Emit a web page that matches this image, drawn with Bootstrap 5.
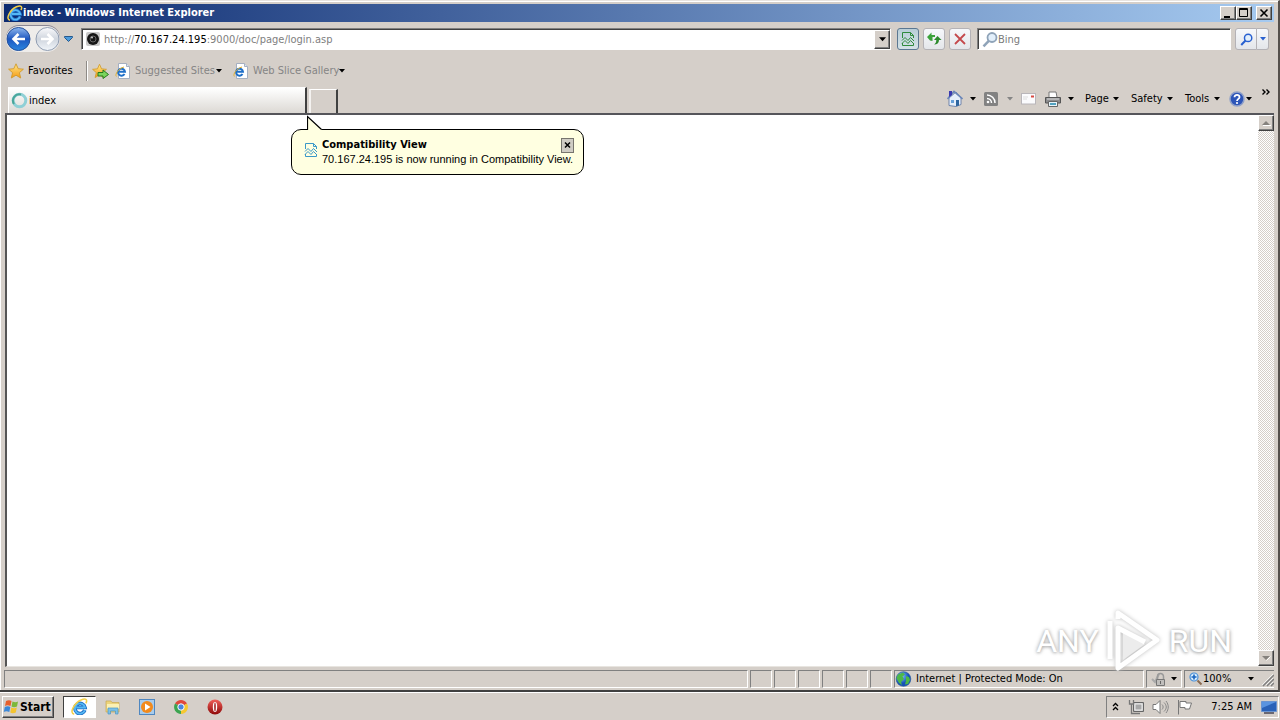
<!DOCTYPE html>
<html lang="en">
<head>
<meta charset="utf-8">
<meta name="viewport" content="width=device-width, initial-scale=1">
<title>index - Windows Internet Explorer</title>
<link href="https://cdn.jsdelivr.net/npm/bootstrap@5.3.0/dist/css/bootstrap.min.css" rel="stylesheet">
<style>
:root{--face:#d5cfc9;--dark:#404040;--shade:#808080}
body{font:11px/14px "DejaVu Sans Condensed","Noto Sans",sans-serif;background:var(--face);color:#000}
svg{display:block;flex:none}
button,.plain{border:0;padding:0;background:none;color:inherit;font:inherit;text-decoration:none;white-space:nowrap}
.frame{padding:4px 4px 0;border-top:1px solid #e8e4e0;border-right:2px solid #55504c;border-bottom:2px solid var(--dark);box-shadow:inset 1px 1px #fff;min-height:0}
.titlebar{height:18px;flex:none;background:linear-gradient(90deg,#0c2a70,#a6caf0);color:#fff;font-weight:bold;margin-top:-1px;padding:0 2px 0 3px}
.raised{background:var(--face);border:1px solid;border-color:#fff var(--dark) var(--dark) #fff;box-shadow:inset -1px -1px var(--shade)}
.winbtn{width:16px;height:14px}
.navrow{height:34px;flex:none;padding:0 5px 0 2px}
.circles{background:#eeecea;border-radius:14px;box-shadow:0 -1px #8b8794}
.sunken{background:#fff;border:1px solid;border-color:var(--shade) #fff #fff var(--shade);box-shadow:inset 1px 1px var(--dark);height:22px}
.sunken input{border:0;outline:0;background:transparent;font:inherit;color:#7a7a7a;min-width:0;padding:2px 0 0}
.urltext{color:#808080;outline:0;white-space:nowrap;padding-top:2px}
.urltext b{font-weight:normal;color:#000}
.drop{width:16px;height:19px}
.gap-nav{margin-left:6px}
.tool{width:22px;height:22px;border:1px solid #b4b2b6;border-radius:3px;background:linear-gradient(#f6f8fb,#e4e6ea)}
.tool.active{background:linear-gradient(#b9ced8,#d4e2e6);border-color:#5b7892;color:#2f8a3c}
.tool.narrow{width:12px}
.blueish{color:#2860d0}
.silver{color:#8fa3b8}
.searchbox{width:254px}
.favrow{height:29px;flex:none;padding-left:4px}
.favhome{width:78px}
.fav{width:107px;margin-left:6px}
.fav.wide{width:112px;margin-left:11px}
.muted{color:#858585}
.divider{width:2px;height:20px;border-left:1px solid #8e8a86;border-right:1px solid #fff}
.tabrow{height:28px;flex:none;padding-left:4px}
.tab{width:299px;height:26px;border:0;border-top:1px solid #fff;border-left:1px solid #fff;border-right:2px solid var(--dark);background:linear-gradient(#fff,#dcd9d4);padding-left:2px}
.newtab{width:29px;height:24px;margin-left:2px;border-top:1px solid #fff;border-left:2px solid #f4f2f0;border-right:2px solid var(--dark)}
.commands{height:29px}
.cmd{display:flex;align-items:center;justify-content:space-between;width:29px;margin-right:8px}
.cmd.mail{width:16px}.cmd.print{margin-right:11px}
.cmd.page{width:34px;margin-right:12px}.cmd.safety{width:42px;margin-right:12px}
.cmd.tools{width:35px;margin-right:9px}.cmd.help{width:23px;margin-right:10px}
.client{border:1px solid;border-width:2px 0 1px 2px;border-color:#55555a #fff #e8e5e0 #555;background:#fff;margin-left:1px;min-height:0}
.scroll{width:16px;background:repeating-conic-gradient(#d5cfc9 0 25%,#fff 0 50%) 0 0/2px 2px;color:#85827e}
.scroll button{width:16px;height:16px}
.balloon{position:absolute;left:284px;top:14px;width:293px;height:46px;border:1px solid #000;border-radius:10px;background:#ffffe1;padding:8px 8px 0 12px}
.tail{position:absolute;left:15px;top:-15px}
.torn-mark{color:#3a98c8}
.message{font-family:"Liberation Sans",sans-serif;white-space:nowrap}
.closer{position:absolute;right:9px;top:8px;width:13px;height:15px;border:1px solid #77756e;background:#cfccc4}
.mark-any{position:absolute;right:42px;bottom:-8px;color:#fff;font:32px/64px "Roboto",sans-serif;text-shadow:0 0 4px #a8a8a8,0 1px 3px #c0c0c0}
.mark-any svg{filter:drop-shadow(0 0 2px #bdbdbd)}
.status{height:23px;flex:none;padding:3px 0 2px;gap:2px}
.pane{height:18px;border:1px solid;border-color:var(--shade) #fff #fff var(--shade)}
.pane.empty{width:22px}
.pane.zone{width:250px}.pane.lock{width:36px}.pane.zoom{width:90px}
.taskbar{height:28px;flex:none;border-top:1px solid #fff;padding:0 1px 0 2px}
.start{width:52px;height:22px;font-size:12px;font-weight:bold}
.running{width:33px;height:22px;margin-left:9px;border:1px solid;border-color:var(--dark) #fff #fff var(--dark);background:#fff}
.launch{width:34px}
.tray{width:173px;height:22px;border:1px solid;border-color:var(--shade) #fff #fff var(--shade)}
</style>
</head>
<body class="vh-100 d-flex flex-column overflow-hidden">
<svg width="0" height="0" class="position-absolute">
<defs>
<linearGradient id="blue" x2="0" y2="1"><stop stop-color="#8fb8ee"/><stop offset=".5" stop-color="#1e57c0"/><stop offset="1" stop-color="#2b86e0"/></linearGradient>
<linearGradient id="pale" x2="0" y2="1"><stop stop-color="#fafafc"/><stop offset=".5" stop-color="#cfd5de"/><stop offset="1" stop-color="#f2f6fa"/></linearGradient>
<linearGradient id="gold" x2="0" y2="1"><stop stop-color="#ffe98a"/><stop offset="1" stop-color="#f59a14"/></linearGradient>
<radialGradient id="sea" cx=".35" cy=".3"><stop stop-color="#8fd0ff"/><stop offset="1" stop-color="#1450b8"/></radialGradient>
<linearGradient id="red" x2="0" y2="1"><stop stop-color="#f0605a"/><stop offset="1" stop-color="#8e0808"/></linearGradient>
<symbol id="caret" viewBox="0 0 6 4"><path d="M0 0h6L3 3.5z" fill="currentColor"/></symbol>
<symbol id="ie" viewBox="0 0 16 16"><path d="M13 11.500A4.800 4.800 0 1 1 13.200 9H5" fill="none" stroke="#1c6cc4" stroke-width="3.400"/><path d="M13 11.500A4.800 4.800 0 1 1 13.200 9H5" fill="none" stroke="#55b8f4" stroke-width="1.800"/><path d="M3 15.200C-2 14.500 3 4.500 9.500 1.800 14.500-.4 15.500 2 14 5" fill="none" stroke="#f3cf4a" stroke-width="1.500"/></symbol>
<symbol id="iepage" viewBox="0 0 16 16"><path d="M3.500 .5h8l3 3v12h-11z" fill="#fff" stroke="#a5afc0"/><path d="M11.500 .5v3h3" fill="#dde4ee" stroke="#a5afc0"/><path d="M9.500 11A3.500 3.500 0 1 1 10 8.800H4" fill="none" stroke="#1f6fc8" stroke-width="2"/><path d="M1.500 13.500C-.5 12 3 5.500 9 4" fill="none" stroke="#e0b030"/></symbol>
<symbol id="star" viewBox="0 0 16 16"><path d="M8 .8l2.200 4.900 5.200.5-4 3.500 1.300 5.300L8 12.200 3.300 15l1.300-5.300-4-3.500 5.200-.5z" fill="url(#gold)" stroke="#d09a2c" stroke-width=".9"/></symbol>
<symbol id="torn" viewBox="0 0 14 16"><path d="M1.500 7V1.500h8l3 3V7M9.500 1.500v3h3M1.500 12v2.500h11V12" fill="none" stroke="currentColor"/><path d="M1 9.500L4 6.500l3 3 2.500-3 3.500 3.500M1 12.500l3-3 3 3 2.500-3 3.500 3.500" fill="none" stroke="currentColor"/></symbol>
<symbol id="glass" viewBox="0 0 16 16"><circle cx="10" cy="6" r="4.500" fill="#e2effb" stroke="currentColor" stroke-width="1.800"/><path d="M6.800 9.300L1.500 14.800" stroke="currentColor" stroke-width="2.500"/></symbol>
</defs>
</svg>

<main class="frame flex-grow-1 d-flex flex-column">
<header class="titlebar d-flex align-items-center">
<svg width="16" height="16"><use href="#ie"/></svg><span class="flex-grow-1">index - Windows Internet Explorer</span>
<button class="raised winbtn" aria-label="Minimize"><svg width="13" height="11"><path d="M3 9h6" stroke="#000" stroke-width="2"/></svg></button>
<button class="raised winbtn" aria-label="Maximize"><svg width="14" height="12"><path d="M2.500 1.500h8v8h-8zM2.500 2.500h8" fill="none" stroke="#000"/></svg></button>
<button class="raised winbtn ms-1" aria-label="Close"><svg width="14" height="12"><path d="M3.500 2.500l7 7m0-7l-7 7" stroke="#000" stroke-width="1.600"/></svg></button>
</header>

<nav class="navrow d-flex align-items-center" aria-label="Address">
<div class="circles d-flex gap-1">
<button aria-label="Back"><svg width="25" height="26"><circle cx="12.500" cy="13" r="11.500" fill="url(#blue)" stroke="#25509c"/><path d="M19 13H8M12.500 8l-5 5 5 5" fill="none" stroke="#fff" stroke-width="2.600"/></svg></button>
<button aria-label="Forward"><svg width="25" height="26"><circle cx="12.500" cy="13" r="11.500" fill="url(#pale)" stroke="#8f9cb0"/><path d="M6 13h11M12.500 8l5 5-5 5" fill="none" stroke="#fff" stroke-width="2.600"/></svg></button>
</div>
<button class="ms-1" aria-label="Recent pages"><svg width="9" height="6"><path d="M.5 .5h8v1l-4 4-4-4z" fill="#4c9bdc" stroke="#27598c"/></svg></button>
<div class="sunken flex-grow-1 d-flex align-items-center ms-2 ps-1">
<svg width="14" height="16"><rect y="1" width="14" height="14" rx="2" fill="#c9c9c9"/><circle cx="7" cy="8" r="6" fill="#151515"/><circle cx="7" cy="8" r="3" fill="none" stroke="#666"/><circle cx="6" cy="6.500" r="1" fill="#ccc"/></svg>
<div class="urltext flex-grow-1 ms-1" role="textbox" aria-label="Address" contenteditable="true" spellcheck="false">http://<b>70.167.24.195</b>:9000/doc/page/login.asp</div>
<button class="raised drop d-flex align-items-center justify-content-center" aria-label="Address history"><svg width="7" height="5"><use href="#caret"/></svg></button>
</div>
<div class="d-flex gap-1 gap-nav">
<button class="tool active d-flex align-items-center justify-content-center" aria-label="Compatibility View"><svg width="14" height="16"><use href="#torn"/></svg></button>
<button class="tool d-flex align-items-center justify-content-center" aria-label="Refresh"><svg width="16" height="16"><path d="M1 6l4.500-4.500V4H9v2H6.500v4L4 9.500z" fill="#3aa23a"/><path d="M15.500 9l-4-4L8 9h2.300c0 2-.8 3.500-2.300 4.500 3 0 5-1.500 5-4.500z" fill="#2c8a2c"/></svg></button>
<button class="tool d-flex align-items-center justify-content-center" aria-label="Stop"><svg width="12" height="12"><path d="M1 1l10 10M11 1L1 11" stroke="#c4494c" stroke-width="1.800"/></svg></button>
</div>
<div class="sunken searchbox d-flex align-items-center gap-nav ps-1"><svg width="16" height="17" class="silver"><use href="#glass"/></svg><input class="flex-grow-1" value="Bing" aria-label="Search"></div>
<div class="d-flex ms-1">
<button class="tool d-flex align-items-center justify-content-center rounded-end-0" aria-label="Go"><svg width="13" height="13" class="blueish"><use href="#glass"/></svg></button>
<button class="tool narrow d-flex align-items-center justify-content-center rounded-start-0 border-start-0 blueish" aria-label="Search options"><svg width="6" height="4"><use href="#caret"/></svg></button>
</div>
</nav>

<nav class="favrow d-flex align-items-center" aria-label="Favorites">
<button class="favhome d-flex align-items-center gap-1"><svg width="16" height="16"><use href="#star"/></svg>Favorites</button>
<span class="divider me-1"></span>
<button aria-label="Add to favorites"><svg width="17" height="16"><use href="#star" width="15"/><path d="M6 9.500h5V7l5.500 4.500L11 15.500V13H6z" fill="#7bd45c" stroke="#267a1c"/></svg></button>
<a href="#" class="plain fav muted d-flex align-items-center"><svg width="16" height="16"><use href="#iepage"/></svg><span class="ms-1 flex-grow-1">Suggested Sites</span><svg width="6" height="4" class="text-black"><use href="#caret"/></svg></a>
<a href="#" class="plain fav wide muted d-flex align-items-center"><svg width="16" height="16"><use href="#iepage"/></svg><span class="ms-1 flex-grow-1">Web Slice Gallery</span><svg width="6" height="4" class="text-black"><use href="#caret"/></svg></a>
</nav>

<div class="tabrow d-flex align-items-end">
<button class="tab d-flex align-items-center"><svg width="18" height="17"><circle cx="8.500" cy="8.500" r="6.300" fill="none" stroke="#8fd0d6" stroke-width="3"/><path d="M3 12a6.300 6.300 0 0 1 7-9.500" fill="none" stroke="#4aa69a" stroke-width="2"/></svg>index</button>
<button class="newtab" aria-label="New tab"></button>
<div class="commands ms-auto d-flex">
<button class="cmd" aria-label="Home"><svg width="16" height="17"><path d="M2 8v7.500l7 1 5-2V8L9 2z" fill="#e6effa" stroke="#5570a0" stroke-width=".8"/><path d="M.5 9L7 1.500l8.500 7.500" fill="none" stroke="#6a86b8" stroke-width="1.600"/><path d="M2 1h3v4l-3 2z" fill="#3a3ab0"/><path d="M9 10h3v5.500l-3 .8z" fill="#2e66a0"/><path d="M4 10h3v3H4z" fill="#66a0d8"/></svg><svg width="6" height="4"><use href="#caret"/></svg></button>
<button class="cmd muted" aria-label="Feeds"><svg width="14" height="14"><rect width="14" height="14" rx="1.500" fill="#828282"/><path d="M3 6.500A4.500 4.500 0 0 1 7.500 11M3 3a8 8 0 0 1 8 8" fill="none" stroke="#fff" stroke-width="1.500"/><circle cx="4" cy="10" r="1.300" fill="#fff"/></svg><svg width="6" height="4"><use href="#caret"/></svg></button>
<button class="cmd mail" aria-label="Read mail"><svg width="15" height="12"><rect x=".5" y=".5" width="14" height="10.500" fill="#fbfbfd" stroke="#b9b6ba"/><path d="M2 4h5M2 6h4" stroke="#ddd"/><path d="M10 2.500h3v2h-3z" fill="#d84a42"/></svg></button>
<button class="cmd print" aria-label="Print"><svg width="16" height="16"><path d="M4 6V1h7l1 5" fill="#fff" stroke="#777"/><path d="M.5 6.500h15V12H.5z" fill="#8c8c8e" stroke="#555"/><path d="M2 8h12" stroke="#ddd"/><path d="M3.500 10.500h9v5h-9z" fill="#e8f4fa" stroke="#666"/><path d="M5 13h6" stroke="#52a2c0" stroke-width="2"/></svg><svg width="6" height="4"><use href="#caret"/></svg></button>
<button class="cmd page">Page<svg width="6" height="4"><use href="#caret"/></svg></button>
<button class="cmd safety">Safety<svg width="6" height="4"><use href="#caret"/></svg></button>
<button class="cmd tools">Tools<svg width="6" height="4"><use href="#caret"/></svg></button>
<button class="cmd help" aria-label="Help"><svg width="16" height="16"><circle cx="8" cy="8" r="7" fill="#2d55b8" stroke="#8fa0c8" stroke-width="1.500"/><path d="M5.500 6.300C5.500 3 10.700 3.300 10.500 6.200 10.400 7.800 8 8 8 10" fill="none" stroke="#fff" stroke-width="1.800"/><circle cx="8" cy="12" r="1.100" fill="#fff"/></svg><svg width="6" height="4"><use href="#caret"/></svg></button>
<button class="align-self-start pe-1" aria-label="More commands"><svg width="8" height="12"><path d="M.5 5.500L3 8 .5 10.500M4.500 5.500L7 8l-2.500 2.500" fill="none" stroke="#000" stroke-width="1.400"/></svg></button>
</div>
</div>

<section class="client flex-grow-1 d-flex position-relative">
<div class="flex-grow-1"></div>
<div class="scroll d-flex flex-column justify-content-between">
<button class="raised" aria-label="Scroll up"><svg width="14" height="14"><path d="M3 9h8L7 5z" fill="currentColor"/><path d="M4 9.500h8" stroke="#fff"/></svg></button>
<button class="raised" aria-label="Scroll down"><svg width="14" height="14"><path d="M3 5h8L7 9z" fill="currentColor"/><path d="M7.500 9.500l4-4" stroke="#fff"/></svg></button>
</div>
<div class="balloon d-flex align-items-start">
<svg class="tail" width="16" height="16"><path d="M.5 16V1.500L14.500 14.500V16z" fill="#ffffe1"/><path d="M.5 15V1.500L14.500 14.500" fill="none" stroke="#000" stroke-width="1.200"/></svg>
<svg width="14" height="16" class="mt-1 torn-mark"><use href="#torn"/></svg>
<div class="ms-1"><strong class="d-block">Compatibility View</strong><span class="message">70.167.24.195 is now running in Compatibility View.</span></div>
<button class="closer" aria-label="Close notification"><svg width="11" height="13"><path d="M3 3.500l5 5m0-5l-5 5" stroke="#000" stroke-width="1.500"/></svg></button>
</div>
<div class="mark-any d-flex align-items-center"><span>ANY</span>
<svg class="ms-1" width="62" height="66" fill="none" stroke-linejoin="round"><path d="M20 24v28l22-16z" fill="#ececec"/><path d="M15 11V5l39 27-39 28V20L42 34M7 13v38" stroke="#fff" stroke-width="5"/></svg>
<span class="ms-1">RUN</span></div>
</section>

<footer class="status d-flex">
<div class="pane flex-grow-1"></div>
<div class="pane empty"></div><div class="pane empty"></div><div class="pane empty"></div><div class="pane empty"></div><div class="pane empty"></div><div class="pane empty"></div>
<div class="pane zone d-flex align-items-center"><svg width="17" height="16"><circle cx="8.500" cy="8" r="7.300" fill="url(#sea)" stroke="#2a5a9a" stroke-width=".7"/><path d="M3 3.500l5-2 2 2-2.500 2L9 8 6 11l1 3-3-2-2.500-5zM11 5l3 1 1 3-2 4-3 .5 1-4z" fill="#4db848"/></svg><span class="ms-1">Internet | Protected Mode: On</span></div>
<button class="pane lock d-flex align-items-center justify-content-between px-1" aria-label="Protected mode settings"><svg width="16" height="16"><path d="M1 8l3 3 4-8" fill="none" stroke="#aaa" stroke-width="2"/><path d="M6.500 8V5.500a3 3 0 0 1 6 0V8" fill="none" stroke="#999" stroke-width="1.500"/><path d="M5.500 8.500h8v6h-8z" fill="#c0bebc" stroke="#777"/><path d="M9.500 10v3" stroke="#666"/></svg><svg width="6" height="4"><use href="#caret"/></svg></button>
<button class="pane zoom d-flex align-items-center ps-1 border-end-0" aria-label="Zoom level"><svg width="14" height="14"><circle cx="5" cy="5" r="4" fill="#d8ecfc" stroke="#4a90d8" stroke-width="1.200"/><path d="M5 2.500v5M2.500 5h5" stroke="#1864c0" stroke-width="1.600"/><path d="M8.500 8.500l4 4" stroke="#8a6a50" stroke-width="2"/></svg><span class="flex-grow-1 text-start">100%</span><svg width="6" height="4" class="me-2"><use href="#caret"/></svg><svg width="12" height="16"><path d="M1 15L12 4M5 15l7-7M9 15l3-3" stroke="#808080" stroke-width="1.500"/><path d="M0 14L11 3M4 14l7-7M8 14l3-3" stroke="#fff" stroke-width=".7"/></svg></button>
</footer>
</main>

<footer class="taskbar d-flex align-items-center">
<button class="raised start d-flex align-items-center"><svg width="17" height="17"><path d="M3 3c2-1 4-1 5.500 0L7.500 8c-2-1-4-1-5.500 0z" fill="#e8602c"/><path d="M9.500 3.500c2 1 4 1 5.500 0l-1 5c-2 1-4 1-5.500 0z" fill="#7cb83c"/><path d="M1.800 9c2-1 4-1 5.500 0l-1 5c-2-1-4-1-5.500 0z" fill="#3c88d8"/><path d="M8.300 9.500c2 1 4 1 5.500 0l-1 5c-2 1-4 1-5.500 0z" fill="#f4c430"/></svg>Start</button>
<button class="running d-flex align-items-center justify-content-center" aria-label="Internet Explorer"><svg width="17" height="17"><use href="#ie"/></svg></button>
<button class="launch d-flex justify-content-center" aria-label="Explorer"><svg width="16" height="16"><path d="M1 2h5l1 1.500h7V13H1z" fill="#ecd47c" stroke="#c8a850" stroke-width=".7"/><path d="M2 5h12v5H2z" fill="#fbf0b4"/><path d="M3 15V9h10v6h-2.500v-3h-5v3z" fill="#7cc0e6" stroke="#4c96c4" stroke-width=".7"/></svg></button>
<button class="launch d-flex justify-content-center" aria-label="Media Player"><svg width="16" height="16"><rect x=".5" y=".5" width="15" height="15" fill="#a8ccec" stroke="#4f87c0"/><circle cx="8" cy="8" r="6" fill="#f28a1c"/><path d="M6 4.500v7L11.500 8z" fill="#fff"/></svg></button>
<button class="launch d-flex justify-content-center" aria-label="Chrome"><svg width="14" height="14"><path d="M7 7L1 3.500A7 7 0 0 1 13 3.500z" fill="#e0483c"/><path d="M7 7l6-3.500A7 7 0 0 1 7 14z" fill="#f6c830"/><path d="M7 7v7A7 7 0 0 1 1 3.500z" fill="#3ca450"/><circle cx="7" cy="7" r="3.200" fill="#4a86e0" stroke="#fff"/></svg></button>
<button class="launch d-flex justify-content-center" aria-label="Opera"><svg width="16" height="16"><circle cx="8" cy="8" r="7.500" fill="url(#red)"/><ellipse cx="8" cy="8" rx="2.200" ry="5" fill="#fff"/><ellipse cx="8" cy="8" rx=".8" ry="4.500" fill="#a02020"/></svg></button>
<div class="tray ms-auto d-flex align-items-center">
<button class="ms-1" aria-label="Show hidden icons"><svg width="9" height="10"><path d="M2 4l2.500-2.500L7 4M2 8l2.500-2.500L7 8" fill="none" stroke="#000" stroke-width="1.300"/></svg></button>
<svg class="ms-2" width="16" height="16"><path d="M5.500 3.500h10v9h-10z" fill="#c8c8c8" stroke="#666"/><path d="M7 5h7v6H7z" fill="#a8a8a8" stroke="#eee"/><path d="M1.500 1v4h4V1M3.500 5v9.500H12" fill="none" stroke="#777" stroke-width="1.300"/></svg>
<svg class="ms-2" width="17" height="16"><path d="M1 5.500h3l4-4v13l-4-4H1z" fill="#fff" stroke="#777"/><path d="M10 5.500c1.500 1.500 1.500 3.500 0 5M12 3.500c3 3 3 6 0 9M14 2c3 4 3 8 0 12" fill="none" stroke="#888"/></svg>
<svg class="ms-2" width="16" height="16"><path d="M1.500 1v14.500M3 2.500h6v1.500h5.500l-2 6H8V8.500H3z" fill="#fff" stroke="#777"/></svg>
<span class="ms-auto me-2">7:25 AM</span>
<button aria-label="Show desktop"><svg width="18" height="16"><path d="M1.500 2.500h15v10h-15z" fill="#2a62b8" stroke="#6a94d0"/><path d="M2 3h14L2 9z" fill="#5a94e0"/><path d="M4 14h10" stroke="#445" stroke-width="1.500"/></svg></button>
</div>
</footer>
<script src="https://cdn.jsdelivr.net/npm/bootstrap@5.3.0/dist/js/bootstrap.bundle.min.js"></script>
</body>
</html>
